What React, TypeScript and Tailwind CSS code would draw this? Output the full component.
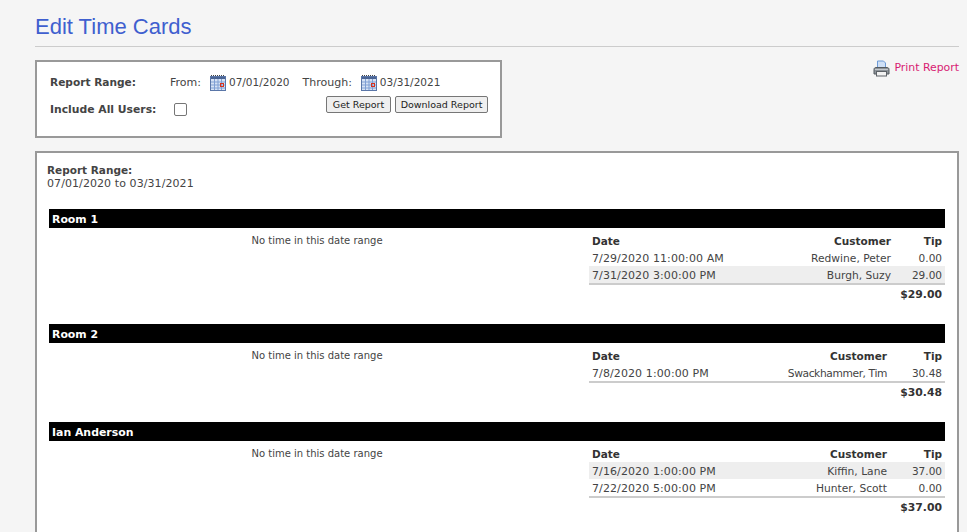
import React from 'react'

interface Row {
  date: string
  customer: string
  customerClass?: string
  tip: string
  shaded?: boolean
}

interface Group {
  name: string
  total: string
  tipClass: string
  rows: Row[]
}

const groups: Group[] = [
  {
    name: 'Room 1',
    total: '$29.00',
    tipClass: 'w-[51px]',
    rows: [
      { date: '7/29/2020 11:00:00 AM', customer: 'Redwine, Peter', tip: '0.00' },
      { date: '7/31/2020 3:00:00 PM', customer: 'Burgh, Suzy', tip: '29.00', shaded: true },
    ],
  },
  {
    name: 'Room 2',
    total: '$30.48',
    tipClass: 'w-[55px]',
    rows: [
      {
        date: '7/8/2020 1:00:00 PM',
        customer: 'Swackhammer, Tim',
        customerClass: 'tracking-[-0.4px]',
        tip: '30.48',
      },
    ],
  },
  {
    name: 'Ian Anderson',
    total: '$37.00',
    tipClass: 'w-[55px]',
    rows: [
      { date: '7/16/2020 1:00:00 PM', customer: 'Kiffin, Lane', tip: '37.00', shaded: true },
      { date: '7/22/2020 5:00:00 PM', customer: 'Hunter, Scott', tip: '0.00' },
    ],
  },
]

function CalendarIcon() {
  return (
    <svg width="16" height="16" viewBox="0 0 16 16" className="shrink-0">
      <rect x="0.5" y="1.5" width="15" height="14" fill="#d6e2f4" stroke="#5a76a8" />
      <rect x="1" y="2" width="14" height="2" fill="#4a6494" />
      <path d="M1 0.5h14" stroke="#444" strokeDasharray="1 1" />
      <path d="M1 7h14M1 10h14M1 13h14M4.5 4v11M8 4v11M11.5 4v11" stroke="#7f9fd4" strokeWidth="1" />
      <rect x="10.5" y="8.5" width="3" height="3" fill="none" stroke="#d8321e" />
    </svg>
  )
}

function PrinterIcon() {
  return (
    <svg width="17" height="17" viewBox="0 0 17 17" className="shrink-0">
      <path d="M4.5 1h6l2 2v6h-8z" fill="#cfe0f6" stroke="#6d9ad6" />
      <path d="M1 9.5c0-1.5 1-2 2-2h11c1 0 2 .5 2 2v4.5H1z" fill="#8d9399" stroke="#555b60" />
      <rect x="3.5" y="11.5" width="10" height="4.5" fill="#f2f2f2" stroke="#5c6166" />
      <path d="M2 9.5h13" stroke="#c4c8cc" />
    </svg>
  )
}

export default function App() {
  return (
    <div className="h-[532px] overflow-hidden bg-[#f5f5f5] pl-[35px] pr-2 text-[11px] text-[#444] font-['DejaVu_Sans',Verdana,sans-serif]">
      <h1 className="h-[46px] pt-[12px] text-[22px] leading-[30px] text-[#3f5fcf] font-['Liberation_Sans',Arial,sans-serif]">
        Edit Time Cards
      </h1>
      <div className="h-px bg-[#ccc]" />

      <div className="flex justify-between items-start pt-[13px]">
        {/* Filter box */}
        <div className="w-[467px] h-[78px] border-2 border-[#999] bg-white pl-[13px] pr-[12px] pt-[11px]">
          <div className="flex items-center h-[20px]">
            <span className="w-[120px] text-[10.6px] font-bold">Report Range:</span>
            <span>From:</span>
            <span className="ml-[9px] mr-[3px]">
              <CalendarIcon />
            </span>
            <span className="text-[10.5px]">07/01/2020</span>
            <span className="ml-[13px]">Through:</span>
            <span className="ml-[9px] mr-[3px]">
              <CalendarIcon />
            </span>
            <span className="text-[10.5px]">03/31/2021</span>
          </div>
          <div className="flex items-start justify-between">
            <div className="flex items-center h-[28px] pt-[5px]">
              <span className="w-[124px] pt-[1px] text-[10.8px] font-bold">Include All Users:</span>
              <span className="w-[13px] h-[13px] rounded-[2px] border border-[#767676] bg-white" />
            </div>
            <div className="flex gap-[4px] pt-[3px]">
              <button className="h-[17px] w-[65px] rounded-[2px] border border-[#767676] bg-[#efefef] text-[9.5px] leading-none text-[#222]">
                Get Report
              </button>
              <button className="h-[17px] w-[93px] rounded-[2px] border border-[#767676] bg-[#efefef] text-[9.5px] leading-none text-[#222]">
                Download Report
              </button>
            </div>
          </div>
        </div>

        <a className="flex items-center gap-[4px] text-[10.9px] text-[#d81b72]">
          <span className="ml-[1px]">
            <PrinterIcon />
          </span>
          Print Report
        </a>
      </div>

      {/* Report */}
      <div className="mt-[13px] h-[400px] border-2 border-[#999] bg-white pl-[10px] pr-[12px] pt-[11px]">
        <div className="text-[10.5px] leading-[13px] font-bold">Report Range:</div>
        <div className="leading-[13px] tracking-[0.08px]">07/01/2020 to 03/31/2021</div>

        <div className="ml-[2px] mt-[19px] flex flex-col gap-[20px]">
          {groups.map(group => (
            <div key={group.name}>
              <div className="h-[19px] bg-black px-[3px] pt-[1px] text-[10.9px] font-bold leading-[19px] text-white">{group.name}</div>
              <div className="flex">
                <div className="w-[540px] pt-[6px] pr-[4px] text-center text-[10px] leading-[13px]">
                  No time in this date range
                </div>
                <div className="w-[356px]">
                  <div className="flex h-[21px] items-end pb-[1px] pl-[3px] pr-[3px] text-[10.5px] font-bold leading-[14px] text-[#333]">
                    <span className="flex-1">Date</span>
                    <span>Customer</span>
                    <span className={`${group.tipClass} text-right`}>Tip</span>
                  </div>
                  {group.rows.map(row => (
                    <div
                      key={row.date}
                      className={`flex h-[17px] items-center pl-[3px] pr-[3px] pt-[3px] ${row.shaded ? 'bg-[#eeeeee]' : ''}`}
                    >
                      <span className="flex-1 tracking-[0.1px]">{row.date}</span>
                      <span className={`text-[10.7px] ${row.customerClass ?? ''}`}>{row.customer}</span>
                      <span className={`${group.tipClass} text-right text-[10.5px]`}>{row.tip}</span>
                    </div>
                  ))}
                  <div className="h-[2px] bg-[#ccc]" />
                  <div className="h-[19px] pr-[3px] text-right text-[10.8px] font-bold leading-[19px] text-[#333]">{group.total}</div>
                </div>
              </div>
            </div>
          ))}
        </div>
      </div>
    </div>
  )
}
